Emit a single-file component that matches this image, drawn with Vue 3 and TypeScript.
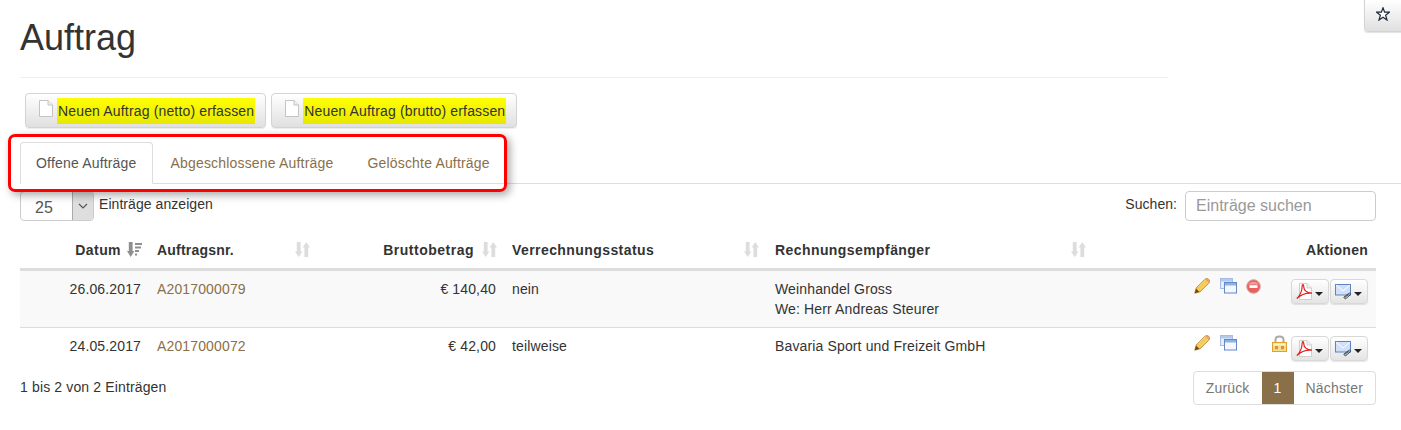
<script setup lang="ts">
interface Order {
  date: string
  number: string
  amount: string
  status: string
  recipient: string[]
  deletable: boolean
  locked: boolean
}

const createButtons = ['Neuen Auftrag (netto) erfassen', 'Neuen Auftrag (brutto) erfassen']
const tabs = ['Offene Aufträge', 'Abgeschlossene Aufträge', 'Gelöschte Aufträge']

const orders: Order[] = [
  {
    date: '26.06.2017',
    number: 'A2017000079',
    amount: '€ 140,40',
    status: 'nein',
    recipient: ['Weinhandel Gross', 'We: Herr Andreas Steurer'],
    deletable: true,
    locked: false,
  },
  {
    date: '24.05.2017',
    number: 'A2017000072',
    amount: '€ 42,00',
    status: 'teilweise',
    recipient: ['Bavaria Sport und Freizeit GmbH'],
    deletable: false,
    locked: true,
  },
]
</script>

<template>
  <div class="page">
    <button class="fav-btn" type="button">
      <svg viewBox="0 0 14 14" width="14" height="14">
        <path d="M7 .8L8.6 5.2H13.4L9.6 8.2L11 13L7 10.2L3 13L4.4 8.2L.6 5.2H5.4Z" fill="#fff" stroke="#1d2a3a" stroke-width="1.2" />
      </svg>
    </button>

    <header class="title-row">
      <h1>Auftrag</h1>
    </header>

    <div class="create-buttons">
      <button v-for="label in createButtons" :key="label" class="create-btn" type="button">
        <svg class="doc-icon" viewBox="0 0 15 17" width="15" height="17">
          <path d="M1.5 .5H10L14.5 5V16.5H1.5Z" fill="#fff" stroke="#c4c4c4" />
          <path d="M10 .5V5H14.5" fill="#eee" stroke="#c4c4c4" />
        </svg>
        <mark>{{ label }}</mark>
      </button>
    </div>

    <div class="tabs-wrap">
      <ul class="tabs">
        <li v-for="(tab, i) in tabs" :key="tab" class="tab" :class="{ active: i === 0 }">{{ tab }}</li>
      </ul>
      <div class="tabs-marker"></div>
    </div>

    <div class="controls">
      <div class="length">
        <div class="select">
          <span class="select-value">25</span>
          <span class="select-arrow">
            <svg viewBox="0 0 10 6" width="10" height="6">
              <path d="M1 1L5 5L9 1" fill="none" stroke="#555" stroke-width="1.2" />
            </svg>
          </span>
        </div>
        <span class="length-label">Einträge anzeigen</span>
      </div>
      <label class="search">
        <span>Suchen:</span>
        <input type="text" placeholder="Einträge suchen" />
      </label>
    </div>

    <table class="orders">
      <colgroup>
        <col class="c-date" />
        <col class="c-number" />
        <col class="c-amount" />
        <col class="c-status" />
        <col class="c-recipient" />
        <col />
      </colgroup>
      <thead>
        <tr>
          <th class="right sort-active">
            Datum
            <svg class="sort" viewBox="0 0 15 15" width="15" height="15">
              <path d="M1.8 0H5.6V9H7.4L3.7 15L0 9H1.8Z" fill="#8f8f8f" />
              <path d="M8 1H15V3H8ZM8 4.5H14V6.5H8ZM8 8H12V10H8ZM8 11.5H10V13.5H8Z" fill="#8f8f8f" />
            </svg>
          </th>
          <th class="th-number">
            Auftragsnr.
            <svg class="sort" viewBox="0 0 15 15" width="15" height="15">
              <path d="M1.8 0H5.6V9.5H7.4L3.7 15L0 9.5H1.8Z" fill="#ddd" />
              <path d="M9.4 15H13.2V5.5H15L11.3 0L7.6 5.5H9.4Z" fill="#ddd" />
            </svg>
          </th>
          <th class="right th-amount">
            Bruttobetrag
            <svg class="sort" viewBox="0 0 15 15" width="15" height="15">
              <path d="M1.8 0H5.6V9.5H7.4L3.7 15L0 9.5H1.8Z" fill="#ddd" />
              <path d="M9.4 15H13.2V5.5H15L11.3 0L7.6 5.5H9.4Z" fill="#ddd" />
            </svg>
          </th>
          <th>
            Verrechnungsstatus
            <svg class="sort" viewBox="0 0 15 15" width="15" height="15">
              <path d="M1.8 0H5.6V9.5H7.4L3.7 15L0 9.5H1.8Z" fill="#ddd" />
              <path d="M9.4 15H13.2V5.5H15L11.3 0L7.6 5.5H9.4Z" fill="#ddd" />
            </svg>
          </th>
          <th>
            Rechnungsempfänger
            <svg class="sort" viewBox="0 0 15 15" width="15" height="15">
              <path d="M1.8 0H5.6V9.5H7.4L3.7 15L0 9.5H1.8Z" fill="#ddd" />
              <path d="M9.4 15H13.2V5.5H15L11.3 0L7.6 5.5H9.4Z" fill="#ddd" />
            </svg>
          </th>
          <th class="right">Aktionen</th>
        </tr>
      </thead>
      <tbody>
        <tr v-for="order in orders" :key="order.number">
          <td class="right">{{ order.date }}</td>
          <td><a class="link">{{ order.number }}</a></td>
          <td class="right">{{ order.amount }}</td>
          <td>{{ order.status }}</td>
          <td>
            <div v-for="line in order.recipient" :key="line">{{ line }}</div>
          </td>
          <td class="actions-cell">
            <div class="actions">
              <span class="slot">
                <svg viewBox="0 0 16 16" width="16" height="16">
                  <path d="M.8 15.2L2.2 10L10.8 1.4C12 .3 13.8 .5 14.8 1.4C15.8 2.4 15.8 4 14.8 5.1L6 13.8Z" fill="#f5c84e" stroke="#b9822a" stroke-width=".9" />
                  <path d="M4.2 9.2L11.6 2M6.4 11.4L13.8 4.2" stroke="#fbe39a" stroke-width=".8" />
                  <path d="M11.2 1.2C12.4 .4 13.9 .6 14.8 1.4C15.7 2.4 15.8 3.8 14.9 5Z" fill="#e9a06e" />
                  <path d="M.8 15.2L2.2 10.8L5.2 13.8Z" fill="#6b4516" />
                </svg>
              </span>
              <span class="slot">
                <svg viewBox="0 0 17 16" width="17" height="16">
                  <rect x=".5" y=".5" width="12" height="10" fill="#e6eefa" stroke="#a5bde6" />
                  <rect x="1" y="1" width="11" height="2.5" fill="#b3c9ee" />
                  <rect x="4.5" y="4.5" width="12" height="10.5" fill="#f4f7fd" stroke="#6388c6" />
                  <rect x="5" y="5" width="11" height="2.5" fill="#8fb0e4" />
                </svg>
              </span>
              <span class="slot">
                <svg v-if="order.deletable" class="stop" viewBox="0 0 15 15" width="15" height="15">
                  <circle cx="7.5" cy="7.5" r="6.8" fill="#e9605e" stroke="#d9a09e" />
                  <path d="M2.2 5.6C3.8 1.8 11.2 1.8 12.8 5.6Z" fill="#f59c98" />
                  <rect x="3.5" y="6.2" width="8" height="2.8" fill="#fff" />
                </svg>
              </span>
              <span class="slot slot-lock">
                <svg v-if="order.locked" viewBox="0 0 15 17" width="15" height="17">
                  <path d="M3.5 8V4.8C3.5 .4 11.5 .4 11.5 4.8V8" fill="none" stroke="#a9a9a9" stroke-width="2" />
                  <rect x=".5" y="7.5" width="14" height="9" fill="#f9dc84" stroke="#dfa02e" />
                  <rect x="1.5" y="8.5" width="12" height="2" fill="#fdf0bf" />
                  <rect x="3" y="11" width="3" height="3.2" fill="#c99a3e" />
                  <rect x="9" y="11" width="3" height="3.2" fill="#c99a3e" />
                </svg>
              </span>
              <div class="btn-group">
                <button class="icon-btn" type="button">
                  <svg viewBox="0 0 17 17" width="17" height="17">
                    <path d="M3.5 .5H11L15.5 5V16.5H3.5Z" fill="#fff" stroke="#cfcfcf" />
                    <path d="M11 .5V5H15.5" fill="#eee" stroke="#cfcfcf" />
                    <path d="M.8 15.5C3.5 13.5 6.2 8 6.2 3C6.2 .8 7.8 1.2 7.8 4C7.8 7 10.5 10 16 10.2C11.5 9.8 5 11.5 .8 15.5Z" fill="none" stroke="#e0201c" stroke-width="1.2" />
                  </svg>
                  <span class="caret"></span>
                </button>
                <button class="icon-btn" type="button">
                  <svg viewBox="0 0 17 16" width="17" height="16">
                    <rect x=".5" y=".5" width="15" height="10.5" fill="#cfe0f8" stroke="#5b85c2" />
                    <path d="M1 1L8 7L15 1" fill="none" stroke="#fff" />
                    <path d="M8.5 13.5L13.5 9.5C15 8.4 16.4 9.8 15.1 11L10.8 14.6C10 15.2 9 14.2 9.8 13.4L13.5 10.4" fill="none" stroke="#444" stroke-width="1" />
                  </svg>
                  <span class="caret"></span>
                </button>
              </div>
            </div>
          </td>
        </tr>
      </tbody>
    </table>

    <footer class="table-footer">
      <span>1 bis 2 von 2 Einträgen</span>
      <nav class="pagination">
        <span class="page-item">Zurück</span>
        <span class="page-item current">1</span>
        <span class="page-item">Nächster</span>
      </nav>
    </footer>
  </div>
</template>

<style>
html,
body {
  margin: 0;
  background: #fff;
}
</style>

<style scoped>
.page {
  position: relative;
  width: 1401px;
  height: 430px;
  box-sizing: border-box;
  padding: 0 25px 0 20px;
  overflow: hidden;
  font-family: "Liberation Sans", Arial, sans-serif;
  font-size: 14px;
  line-height: 20px;
  letter-spacing: 0.18px;
  color: #333;
}

.fav-btn {
  position: absolute;
  top: -1px;
  right: -1px;
  display: flex;
  align-items: center;
  justify-content: center;
  width: 38px;
  height: 33px;
  padding: 0 0 4px;
  border: 1px solid #d4d4d4;
  border-radius: 0 0 0 4px;
  background: linear-gradient(#fff, #e0e0e0);
  box-shadow: 0 1px 1px rgba(0, 0, 0, 0.12);
}

.title-row {
  width: 1148px;
  height: 77px;
  border-bottom: 1px solid #eee;
}

h1 {
  margin: 0;
  padding-top: 18px;
  font-size: 36px;
  font-weight: 400;
  line-height: 40px;
  letter-spacing: 0;
}

.create-buttons {
  display: flex;
  gap: 5px;
  margin: 15px 0 0 5px;
}

.create-btn {
  display: flex;
  align-items: center;
  height: 35px;
  padding: 0 10px 0 12px;
  border: 1px solid #d4d4d4;
  border-radius: 4px;
  background: linear-gradient(#fff, #e0e0e0);
  box-shadow: 0 1px 1px rgba(0, 0, 0, 0.075);
  font: inherit;
  letter-spacing: 0.16px;
  color: #333;
}

.doc-icon {
  margin-right: 4px;
  margin-bottom: 4px;
}

mark {
  display: block;
  padding: 3px 1px;
  background: linear-gradient(#ffff00, #e8e800);
  color: #333;
}

.tabs-wrap {
  position: relative;
  margin: 14px -25px 0 0;
}

.tabs {
  display: flex;
  height: 41px;
  margin: 0;
  padding: 0;
  list-style: none;
  border-bottom: 1px solid #ddd;
}

.tab {
  padding: 10px 15px;
  margin-right: 2px;
  border: 1px solid transparent;
  border-radius: 4px 4px 0 0;
  color: #8a7049;
}

.tab.active {
  height: 20px;
  border-color: #ddd #ddd #fff;
  background: #fff;
  color: #555;
}

.tabs-marker {
  position: absolute;
  left: -12px;
  top: -8px;
  width: 493px;
  height: 52px;
  border: 3px solid #f00;
  border-radius: 7px;
  box-shadow: 3px 3px 8px rgba(0, 0, 0, 0.35);
  pointer-events: none;
}

.controls {
  display: flex;
  justify-content: space-between;
  height: 30px;
  margin-top: 7px;
}

.length {
  display: flex;
  align-items: flex-start;
  gap: 5px;
}

.length-label {
  margin-top: 3px;
  letter-spacing: 0.06px;
}

.select {
  display: flex;
  width: 74px;
  height: 30px;
  box-sizing: border-box;
  border: 1px solid #ccc;
  border-radius: 4px;
  overflow: hidden;
  font-size: 16px;
  letter-spacing: 0;
  color: #555;
}

.select-value {
  flex: 1;
  padding: 6px 0 0 14px;
}

.select-arrow {
  display: flex;
  align-items: center;
  justify-content: center;
  width: 20px;
  border-left: 1px solid #aaa;
  background: #dedede;
}

.search {
  display: flex;
  align-items: flex-start;
  gap: 8px;
}

.search span {
  margin-top: 3px;
  letter-spacing: 0.05px;
}

.search input {
  width: 191px;
  height: 30px;
  box-sizing: border-box;
  padding: 0 10px;
  border: 1px solid #ccc;
  border-radius: 4px;
  font-family: inherit;
  font-size: 16px;
  color: #555;
}

.search input::placeholder {
  color: #999;
  opacity: 1;
}

.orders {
  width: 1356px;
  margin-top: 10px;
  table-layout: fixed;
  border-collapse: collapse;
}

.c-date {
  width: 129px;
}
.c-number {
  width: 169px;
}
.c-amount {
  width: 186px;
}
.c-status {
  width: 263px;
}
.c-recipient {
  width: 327px;
}

th {
  position: relative;
  height: 37px;
  padding: 0 8px;
  border-bottom: 3px solid #ddd;
  font-weight: 700;
  text-align: left;
  letter-spacing: 0.42px;
}

th.right {
  padding-right: 27px;
  text-align: right;
}

th:last-child {
  padding-right: 8px;
  letter-spacing: 0.25px;
}

th.th-number {
  letter-spacing: 0.2px;
}

th.th-amount {
  padding-right: 30px;
  letter-spacing: 0.5px;
}

.sort {
  position: absolute;
  top: 11px;
  right: 8px;
}

th.right .sort {
  right: 7px;
}

th.sort-active {
  padding-right: 28px;
}

td {
  padding: 8px;
  vertical-align: top;
  border-bottom: 1px solid #ddd;
  letter-spacing: 0.14px;
}

tbody tr:nth-child(1) td {
  height: 40px;
  background: #f9f9f9;
}

tbody tr:nth-child(2) td {
  height: 21px;
  border-bottom: 0;
}

.right {
  text-align: right;
}

.link {
  color: #8a7049;
}

.actions-cell {
  padding-top: 7px;
  padding-bottom: 0;
}

.actions {
  display: flex;
  align-items: flex-start;
  justify-content: flex-end;
}

.slot {
  display: block;
  width: 26px;
  height: 18px;
}

.slot-lock {
  width: 19px;
}

.stop {
  margin-top: 1px;
}

.btn-group {
  display: flex;
  gap: 1px;
  margin-top: 1px;
}

.icon-btn {
  display: flex;
  align-items: center;
  gap: 2px;
  width: 38px;
  height: 25px;
  padding: 0 0 0 4px;
  border: 1px solid #d8d8d8;
  border-radius: 4px;
  background: linear-gradient(#fff, #e4e4e4);
  box-shadow: 0 1px 1px rgba(0, 0, 0, 0.1);
}

.caret {
  width: 0;
  height: 0;
  margin-top: 5px;
  border-top: 4px solid #222;
  border-left: 4px solid transparent;
  border-right: 4px solid transparent;
}

.table-footer {
  display: flex;
  justify-content: space-between;
  align-items: flex-start;
  margin-top: 6px;
}

.table-footer > span {
  margin-top: 6px;
  letter-spacing: 0.14px;
}

.pagination {
  display: flex;
  height: 34px;
  box-sizing: border-box;
  border: 1px solid #ddd;
  border-radius: 4px;
  overflow: hidden;
}

.page-item {
  padding: 6px 12px;
  color: #777;
}

.page-item.current {
  margin: -1px 0;
  padding-top: 7px;
  background: #8a7049;
  color: #fff;
}
</style>
